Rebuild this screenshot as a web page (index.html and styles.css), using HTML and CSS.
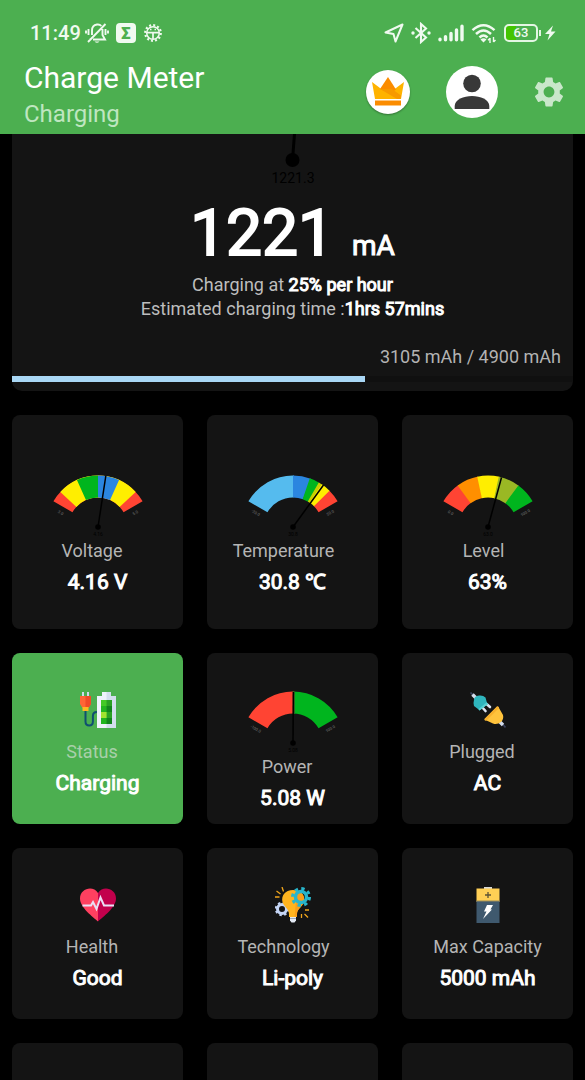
FILE: index.html
```html
<!DOCTYPE html>
<html lang="en">
<head>
<meta charset="utf-8">
<meta name="viewport" content="width=device-width, initial-scale=1">
<title>Charge Meter</title>
<link rel="stylesheet" href="styles.css">
</head>
<body>
<header class="header">
  <div class="statusbar">
    <div class="status-group">
      <span class="clock">11:49</span>
      <svg class="bell" width="24" height="22" viewBox="0 0 24 22" fill="none" stroke="currentColor" stroke-width="1.9">
        <path d="M7 13V8.500c0-3 2-5.500 5-6 2-.3 3.500.5 4.300 1.500M17.500 7v6l2.500 4.500H8M5 17.500h-.5M3 20 20.500 2M3.500 7v6M1 8.500v3M20.500 7v6M23 8.500v3"/>
        <path d="M9.500 19.500h5q-2.500 2.500-5 0z" fill="currentColor" stroke="none"/>
      </svg>
      <span class="sigma">Σ</span>
      <svg width="20" height="20" viewBox="0 0 20 20" fill="none" stroke="currentColor">
        <circle cx="10" cy="10" r="7.800" stroke-width="2.200" stroke-dasharray="2 2.080"/>
        <circle cx="10" cy="10" r="6.300" stroke-width="1.500"/>
        <path d="M4 9.700h12M10 10v6" stroke-width="1.700"/>
        <path d="M7 6.500h1.500M11.500 6.500H13" stroke-width="1.300"/>
      </svg>
    </div>
    <div class="status-group">
      <svg width="20" height="20" viewBox="0 0 20 20" fill="none" stroke="currentColor" stroke-width="2" stroke-linejoin="round"><path d="M18.500 1.500 11.500 18.500 9.500 11 1.500 9.500z"/></svg>
      <svg width="20" height="22" viewBox="0 0 20 22" fill="none" stroke="currentColor" stroke-width="2.100"><path d="M4.500 6 15 15.500 10 20V2l5 4.500L4.500 16"/><circle cx="2" cy="11" r="1.700" fill="currentColor" stroke="none"/><circle cx="18" cy="11" r="1.700" fill="currentColor" stroke="none"/></svg>
      <svg width="26" height="18" viewBox="0 0 26 18" stroke="currentColor" stroke-width="3.400" stroke-linecap="round"><path d="M2 15.300v.5M7.500 12.800v3M13 9.500v6.300M18.500 6v9.800M24 2.300v13.500"/></svg>
      <svg width="26" height="20" viewBox="0 0 26 20" fill="none" stroke="currentColor" stroke-width="2.500"><path d="M1.500 7.200q11-10 22 0M5 11q7.500-7 15 0M8.500 14.500q4-4 8 0"/><path d="M9.500 16.500q3-2.500 6 0l-3 3z" fill="currentColor" stroke="none"/><path d="M19 20v-5M17 17.300l2-2M22.500 14v5M24.500 17l-2 2" stroke-width="1.400"/></svg>
      <span class="battery"><span class="battery-body">63</span><span class="battery-cap"></span></span>
      <svg class="bolt" width="11" height="16" viewBox="0 0 11 16" fill="currentColor"><path d="M8 .5 0 9h4.500L2.500 15.500 10.500 6.500H6z"/></svg>
    </div>
  </div>
  <div class="appbar">
    <div class="titles">
      <h1 class="title">Charge Meter</h1>
      <p class="subtitle">Charging</p>
    </div>
    <div class="actions">
      <button class="round premium" aria-label="Premium">
        <svg width="34" height="30" viewBox="0 0 34 30">
          <path d="M1 5 11 12.500 17 12 23 12.500 33 5 30 22H4z" fill="#ffb300"/>
          <path d="M17 0 25 12.500 20 16 9 12z" fill="#fb8c00"/>
          <path d="M9 12 21 12 30 18.500 29.500 22H26z" fill="#f79a00"/>
          <path d="M4 23.500h26v5H4z" fill="#fb8c00"/>
        </svg>
      </button>
      <button class="round avatar" aria-label="Account">
        <svg width="36" height="36" viewBox="0 0 36 36" fill="#383838"><circle cx="18" cy="9.500" r="8.800"/><path d="M.7 35v-3c0-6.500 9-10 17.300-10s17.300 3.500 17.300 10v3z"/></svg>
      </button>
      <button class="gear" aria-label="Settings">
        <svg width="36" height="36" viewBox="0 0 24 24" fill="#c9e7ca"><path d="M19.140 12.940c.04-.3.060-.61.060-.94 0-.32-.02-.64-.07-.94l2.030-1.580c.18-.14.230-.41.120-.61l-1.920-3.320c-.12-.22-.37-.29-.59-.22l-2.390.96c-.5-.38-1.030-.7-1.620-.94l-.36-2.540c-.04-.24-.24-.41-.48-.41h-3.840c-.24 0-.43.170-.47.410l-.36 2.540c-.59.240-1.130.57-1.620.94l-2.390-.96c-.22-.08-.47 0-.59.220L2.740 8.870c-.12.210-.08.470.12.610l2.030 1.580c-.05.300-.09.630-.09.940s.02.640.070.940l-2.030 1.580c-.18.140-.23.410-.12.610l1.920 3.320c.12.220.37.290.59.220l2.390-.96c.5.380 1.030.7 1.620.94l.36 2.540c.05.240.24.410.48.410h3.840c.24 0 .44-.17.470-.41l.36-2.540c.59-.24 1.130-.56 1.620-.94l2.390.96c.22.080.47 0 .59-.22l1.920-3.320c.12-.22.070-.47-.12-.61l-2.010-1.580zM12 15.600c-1.980 0-3.600-1.620-3.600-3.600s1.620-3.600 3.600-3.600 3.600 1.620 3.600 3.600-1.620 3.600-3.600 3.600z"/></svg>
      </button>
    </div>
  </div>
</header>

<main class="content">
  <section class="summary">
    <svg class="dial" width="80" height="56" viewBox="0 0 80 56">
      <path d="M41.500 0 39.500 26" stroke="#000" stroke-width="3"/>
      <circle cx="39.500" cy="26" r="7"/>
      <text x="40" y="49" text-anchor="middle" font-size="14">1221.3</text>
    </svg>
    <p class="reading"><span class="amount">1221</span><span class="unit">mA</span></p>
    <p class="line">Charging at <b>25% per hour</b></p>
    <p class="line">Estimated charging time :<b>1hrs 57mins</b></p>
    <p class="capacity" id="capacity">3105 mAh / 4900 mAh</p>
    <progress class="bar" value="63" max="100" aria-labelledby="capacity"></progress>
  </section>

  <section class="grid">
    <article class="card tall">
      <svg class="gauge" width="100" height="68" viewBox="0 0 100 68">
        <g class="arc">
          <path stroke="#ff4433" d="M14.930 35.750A40.500 40.500 0 0 1 85.070 35.750"/>
          <path stroke="#ffee00" d="M14.930 35.750A40.500 40.500 0 0 1 85.070 35.750" pathLength="120" stroke-dasharray="0 13 94 200"/>
          <path stroke="#00b51e" d="M14.930 35.750A40.500 40.500 0 0 1 85.070 35.750" pathLength="120" stroke-dasharray="0 36 24 200"/>
          <path stroke="#2b86e0" d="M14.930 35.750A40.500 40.500 0 0 1 85.070 35.750" pathLength="120" stroke-dasharray="0 60 24 200"/>
        </g>
        <path class="needle" d="M50 56 57.800 5"/><circle cx="50" cy="56" r="2.800"/>
        <text class="now" x="50" y="65">4.16</text>
        <text class="end" transform="translate(12 43) rotate(30)">3.0</text><text class="end" transform="translate(88 43) rotate(-30)">5.0</text>
      </svg>
      <h2 class="label">Voltage</h2><p class="value">4.16 V</p>
    </article>
    <article class="card tall">
      <svg class="gauge" width="100" height="68" viewBox="0 0 100 68">
        <g class="arc">
          <path stroke="#55bbee" d="M14.930 35.750A40.500 40.500 0 0 1 85.070 35.750" pathLength="120" stroke-dasharray="61 200"/>
          <path stroke="#2b86e0" d="M14.930 35.750A40.500 40.500 0 0 1 85.070 35.750" pathLength="120" stroke-dasharray="0 60 20 200"/>
          <path stroke="#00b51e" d="M14.930 35.750A40.500 40.500 0 0 1 85.070 35.750" pathLength="120" stroke-dasharray="0 79 12 200"/>
          <path stroke="#c8d000" d="M14.930 35.750A40.500 40.500 0 0 1 85.070 35.750" pathLength="120" stroke-dasharray="0 90 5 200"/>
          <path stroke="#ffee00" d="M14.930 35.750A40.500 40.500 0 0 1 85.070 35.750" pathLength="120" stroke-dasharray="0 94 12 200"/>
          <path stroke="#ff4433" d="M14.930 35.750A40.500 40.500 0 0 1 85.070 35.750" pathLength="120" stroke-dasharray="0 105 15"/>
        </g>
        <path class="needle" d="M50 56 80.500 14"/><circle cx="50" cy="56" r="2.800"/>
        <text class="now" x="50" y="65">30.8</text>
        <text class="end" transform="translate(12 43) rotate(30)">-20.0</text><text class="end" transform="translate(88 43) rotate(-30)">50.0</text>
      </svg>
      <h2 class="label label-long">Temperature</h2><p class="value">30.8 ℃</p>
    </article>
    <article class="card tall">
      <svg class="gauge" width="100" height="68" viewBox="0 0 100 68">
        <g class="arc">
          <path stroke="#ff4433" d="M14.930 35.750A40.500 40.500 0 0 1 85.070 35.750" pathLength="120" stroke-dasharray="25 200"/>
          <path stroke="#ff8f00" d="M14.930 35.750A40.500 40.500 0 0 1 85.070 35.750" pathLength="120" stroke-dasharray="0 24 25 200"/>
          <path stroke="#ffee00" d="M14.930 35.750A40.500 40.500 0 0 1 85.070 35.750" pathLength="120" stroke-dasharray="0 48 25 200"/>
          <path stroke="#9ab824" d="M14.930 35.750A40.500 40.500 0 0 1 85.070 35.750" pathLength="120" stroke-dasharray="0 72 25 200"/>
          <path stroke="#00b51e" d="M14.930 35.750A40.500 40.500 0 0 1 85.070 35.750" pathLength="120" stroke-dasharray="0 96 24"/>
        </g>
        <path class="needle" d="M50 56 63.500 6.500"/><circle cx="50" cy="56" r="2.800"/>
        <text class="now" x="50" y="65">63.0</text>
        <text class="end" transform="translate(12 43) rotate(30)">0.0</text><text class="end" transform="translate(88 43) rotate(-30)">100.0</text>
      </svg>
      <h2 class="label label-short">Level</h2><p class="value">63%</p>
    </article>

    <article class="card active">
      <svg class="icon" width="36" height="36" viewBox="0 0 36 36">
        <path d="M5.500 18v11.500q0 4 3.700 4t3.700-4V24q0-4 4-4" fill="none" stroke="#0f4f70" stroke-width="2"/>
        <path d="M2 0h2v4H2zM7 0h2v4H7z" fill="#cfdcec"/>
        <path d="M0 4h11v8l-2.500 4h-6L0 12z" fill="#ff6536"/><path d="M5.500 4H11v8l-2.500 4h-3z" fill="#f04a28"/>
        <path d="M2.500 15h6v4h-6z" fill="#ffb820"/>
        <path d="M22 0h9v4h5v32H17V4h5z" fill="#eef2fb"/><path d="M26.500 0H31v4h5v32h-9.500z" fill="#d3deee"/>
        <path d="M21 8h11v24H21z" fill="#43c927"/><path d="M26.500 8H32v24h-5.500z" fill="#2aa125"/>
        <path d="M21 14h5.500v6H21zM21 26h5.500v6H21z" fill="#21b51f"/><path d="M21 20h5.500v6H21z" fill="#a1e330"/><path d="M26.500 14H32v6h-5.500zM26.500 26H32v6h-5.500z" fill="#12851d"/>
      </svg>
      <h2 class="label">Status</h2><p class="value">Charging</p>
    </article>
    <article class="card with-gauge">
      <svg class="gauge" width="100" height="68" viewBox="0 0 100 68">
        <g class="arc">
          <path stroke="#ff4433" d="M14.930 35.750A40.500 40.500 0 0 1 85.070 35.750" pathLength="120" stroke-dasharray="61 200"/>
          <path stroke="#00b51e" d="M14.930 35.750A40.500 40.500 0 0 1 85.070 35.750" pathLength="120" stroke-dasharray="0 60 60"/>
        </g>
        <path d="M51.200 4.500v22" stroke="#2d6420" stroke-width="1.500"/>
        <path class="needle" d="M50 56 50.300 5"/><circle cx="50" cy="56" r="2.800"/>
        <text class="now" x="50" y="65">5.08</text>
        <text class="end" transform="translate(12 43) rotate(30)">-100.0</text><text class="end" transform="translate(88 43) rotate(-30)">100.0</text>
      </svg>
      <h2 class="label">Power</h2><p class="value">5.08 W</p>
    </article>
    <article class="card">
      <svg class="icon" width="36" height="36" viewBox="0 0 36 36">
        <path d="M.5.500 3 3M33 32.500l2.500 3" stroke="#39405c" stroke-width="1.600"/>
        <path d="M2.500 2.500 6 6M29.500 29.500l3.500 3.500" stroke="#d3dbea" stroke-width="3.400"/>
        <path d="M11.500 14.500l4 4.500M16 11.500l4 3.500" stroke="#dfe6f2" stroke-width="2.600" stroke-linecap="round"/>
        <path d="M4 8q0-4 5-4.500 4-.5 6.500 2l1.500 5.500 1 1L9.500 18.500l-1.500-1.500-4-3q-1-3 0-6z" fill="#2fb5bd"/><path d="M8.500 17l8-6.500 1.500 1.500L9.500 18.500z" fill="#57d0d3"/>
        <path d="M14.500 27 27 14.500q2-.5 2 1.500l4 7q1 4-2 7-4 3-8 1.500L16.500 28.500q-2 .5-2-1.500z" fill="#ffc33c"/><path d="M14.500 27 27 14.500q2-.5 2 1.500L16.500 28.500q-2 .5-2-1.500z" fill="#f8b02c"/>
      </svg>
      <h2 class="label">Plugged</h2><p class="value">AC</p>
    </article>

    <article class="card">
      <svg class="icon" width="36" height="36" viewBox="0 0 36 36">
        <path d="M18 34.500C13 30 0 20.500 0 11.500 0 1.500 13-2 18 6z" fill="#ff4060"/><path d="M18 34.500C23 30 36 20.500 36 11.500 36 1.500 23-2 18 6z" fill="#c2004c"/>
        <path d="M2.500 18.500H11l2-3.500 3.500 7 4-11.500 3.500 8h10" fill="none" stroke="#eadff5" stroke-width="2"/>
      </svg>
      <h2 class="label">Health</h2><p class="value">Good</p>
    </article>
    <article class="card">
      <svg class="icon" width="36" height="36" viewBox="0 0 36 36">
        <circle cx="7" cy="22" r="4.500" fill="none" stroke="#c5d5f5" stroke-width="3"/><circle cx="7" cy="22" r="6.200" fill="none" stroke="#c5d5f5" stroke-width="2" stroke-dasharray="2.400 2.470"/>
        <path d="M18 3c-8 0-12 6-10.500 12 1.200 4.500 6.500 6.500 6.500 12v3h8v-3c0-5.500 6-7 7-13C30 7 25 3 18 3z" fill="#ffb41f"/>
        <path d="M22 3.500c5 1 8 6 7 10.500-1 6-7 7.500-7 13v3h-2.500z" fill="#fb9f18"/>
        <path d="M15 30h6v3.500l-1.500 2h-3l-1.500-2z" fill="#e3e9f3"/><path d="M15 31.500h6" stroke="#9aa7b8"/>
        <circle cx="26" cy="10" r="5.500" fill="none" stroke="#28b5cb" stroke-width="3.500"/><circle cx="26" cy="10" r="8.500" fill="none" stroke="#28b5cb" stroke-width="3" stroke-dasharray="3.340"/>
        <path d="M0 10h4.500M1.500 4l4 3M7 0l1.500 4.500M30 23h4M29.500 27l3.500 3.500M26.500 27v4" stroke="#efa51c" stroke-width="1.300"/>
      </svg>
      <h2 class="label label-long">Technology</h2><p class="value">Li-poly</p>
    </article>
    <article class="card">
      <svg class="icon" width="36" height="36" viewBox="0 0 36 36">
        <path d="M14 0h8v2h-8z" fill="#d5d7d9"/><path d="M6.500 1.500h23V15h-23z" fill="#ffcf55"/><path d="M6.500 14h23v22h-23z" fill="#3f596e"/><path d="M6.500 14h23" stroke="#9a8c5c"/>
        <path d="M18 5v6M15 8h6" stroke="#5d5435" stroke-width="1.300"/>
        <path d="M17 18h6l-2.500 4.500H22L13 32l3.500-7.500H14z" fill="#fff"/>
      </svg>
      <h2 class="label label-full">Max Capacity</h2><p class="value">5000 mAh</p>
    </article>

    <article class="card blank"></article>
    <article class="card blank"></article>
    <article class="card blank"></article>
  </section>
</main>
</body>
</html>
```
FILE: styles.css
```css
* { box-sizing: border-box; }

body {
  margin: 0;
  height: 100vh;
  display: flex;
  flex-direction: column;
  overflow: hidden;
  background: #000;
  color: #fff;
  font-family: Roboto, "Noto Sans", sans-serif;
}

h1, h2, p { margin: 0; font-weight: 400; }
svg { display: block; flex: none; }
button {
  display: grid;
  place-items: center;
  padding: 0;
  border: 0;
  background: none;
}

.header { flex: none; height: 134px; background: #4caf50; }

.statusbar {
  display: flex;
  justify-content: space-between;
  padding: 21px 29px 0 30px;
  color: #f0faf0;
}
.status-group { display: flex; align-items: center; gap: 7px; height: 24px; }
.clock { font-size: 20px; line-height: 24px; font-weight: 500; }
.bell { margin-left: -3px; }
.sigma {
  width: 20px;
  border-radius: 4px;
  background: #f0faf0;
  color: #4caf50;
  font-size: 17px;
  font-weight: 900;
  line-height: 20px;
  text-align: center;
}
.battery { display: flex; align-items: center; gap: 1px; }
.battery-body {
  width: 34px;
  border: 2px solid #e4f6e4;
  border-radius: 5px;
  background: linear-gradient(90deg, #43c400 35%, #4caf50 35%);
  font-size: 13px;
  line-height: 14px;
  font-weight: 500;
  text-align: center;
}
.battery-cap { width: 2px; height: 6px; background: #e4f6e4; }
.bolt { margin-left: -3px; }

.appbar {
  display: flex;
  justify-content: space-between;
  padding: 15px 18px 0 24px;
}
.title { font-size: 30px; line-height: 36px; }
.subtitle { margin-top: 3px; font-size: 24px; line-height: 30px; color: #bfe6c0; }
.actions { display: flex; align-items: center; height: 64px; }
.round { border-radius: 50%; background: #fff; }
.premium { width: 44px; height: 44px; box-shadow: 0 1px 2px rgba(0, 0, 0, .35); }
.avatar { width: 52px; height: 52px; margin: 0 33px 0 36px; }

.content { flex: 1; min-height: 0; overflow: hidden; padding: 0 12px; }

.summary {
  padding-bottom: 9px;
  border-radius: 0 0 10px 10px;
  background: #141414;
  text-align: center;
}
.dial { margin: 0 auto; }
.reading {
  display: flex;
  justify-content: center;
  align-items: baseline;
  gap: 18px;
  height: 83px;
  line-height: 87px;
}
.amount { font-size: 64px; -webkit-text-stroke: 2px currentColor; }
.unit { font-size: 28px; -webkit-text-stroke: 1px currentColor; }
.line { font-size: 18px; line-height: 24px; color: #bdbdbd; }
.line b { font-weight: 400; color: #fff; -webkit-text-stroke: 1px currentColor; }
.capacity {
  margin-top: 24px;
  padding: 0 12px 7px;
  font-size: 18px;
  line-height: 24px;
  text-align: right;
  color: #b3b3b3;
}
.bar {
  display: block;
  width: 100%;
  height: 6px;
  border: 0;
  appearance: none;
  background: #101010;
}
.bar::-webkit-progress-bar { background: #101010; }
.bar::-webkit-progress-value { background: #a9d7f5; }

.grid {
  display: grid;
  grid-template-columns: repeat(3, 1fr);
  gap: 24px;
  margin-top: 24px;
}
.card {
  padding: 39px 0 26px;
  border-radius: 8px;
  background: #141414;
  text-align: center;
}
.tall { padding: 56px 0 32px; }
.with-gauge { padding: 34px 0 11px; }
.active { background: #4caf50; }
.blank { min-height: 171px; }

.icon { margin: 0 auto 12px; }
.gauge { margin: 0 auto; }
.arc { fill: none; stroke-width: 22px; }
.needle { stroke: #000; stroke-width: 1.5px; }
.now { font-size: 5px; text-anchor: middle; }
.end { font-size: 4px; text-anchor: middle; fill: #777; }

.label { padding-right: 11px; font-size: 18px; line-height: 24px; color: #b5b5b5; }
.label-long { padding-right: 18px; }
.label-short { padding-right: 8px; }
.label-full { padding-right: 0; }
.active .label { color: #a9cfaa; }
.value {
  margin-top: 4px;
  font-size: 21px;
  line-height: 30px;
  -webkit-text-stroke: 1px currentColor;
}
```
